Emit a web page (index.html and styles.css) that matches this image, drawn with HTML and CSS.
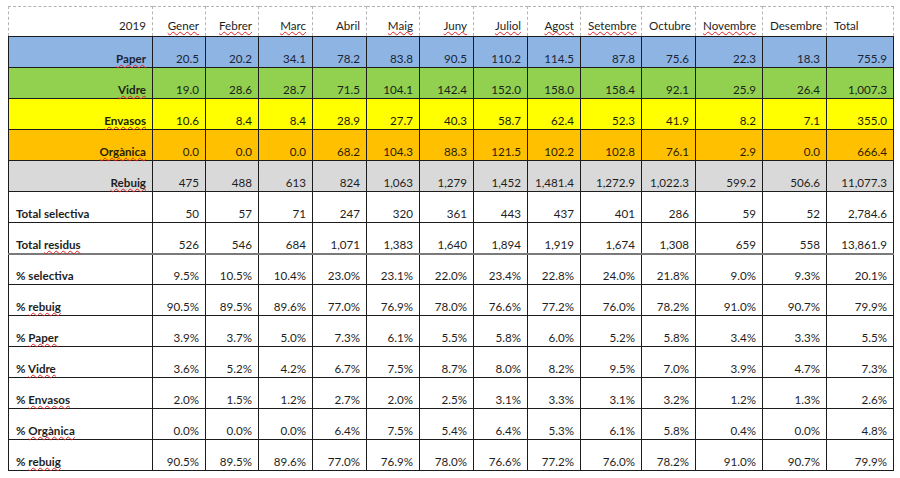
FILE: index.html
```html
<!DOCTYPE html>
<html lang="ca">
<head>
<meta charset="utf-8">
<title>Residus 2019</title>
<link rel="stylesheet" href="styles.css">
</head>
<body>
<div class="sheet">
<table class="grid">
<colgroup>
<col class="c-label"><col class="c53"><col class="c53"><col class="c54"><col class="c54"><col class="c53"><col class="c54"><col class="c54"><col class="c53"><col class="c61"><col class="c54"><col class="c67"><col class="c64"><col class="c67">
</colgroup>
<thead>
<tr class="head">
<th class="num">2019</th>
<th class="num"><span class="sq">Gener</span></th>
<th class="num"><span class="sq">Febrer</span></th>
<th class="num"><span class="sq">Marc</span></th>
<th class="num">Abril</th>
<th class="num"><span class="sq">Maig</span></th>
<th class="num"><span class="sq">Juny</span></th>
<th class="num"><span class="sq">Juliol</span></th>
<th class="num"><span class="sq">Agost</span></th>
<th class="num"><span class="sq">Setembre</span></th>
<th class="num">Octubre</th>
<th class="num"><span class="sq">Novembre</span></th>
<th class="num">Desembre</th>
<th class="txt">Total</th>
</tr>
</thead>
<tbody>
<tr class="r-paper"><th class="num"><span class="sq">Paper</span></th><td>20.5</td><td>20.2</td><td>34.1</td><td>78.2</td><td>83.8</td><td>90.5</td><td>110.2</td><td>114.5</td><td>87.8</td><td>75.6</td><td>22.3</td><td>18.3</td><td>755.9</td></tr>
<tr class="r-vidre"><th class="num"><span class="sq">Vidre</span></th><td>19.0</td><td>28.6</td><td>28.7</td><td>71.5</td><td>104.1</td><td>142.4</td><td>152.0</td><td>158.0</td><td>158.4</td><td>92.1</td><td>25.9</td><td>26.4</td><td>1,007.3</td></tr>
<tr class="r-envasos"><th class="num"><span class="sq">Envasos</span></th><td>10.6</td><td>8.4</td><td>8.4</td><td>28.9</td><td>27.7</td><td>40.3</td><td>58.7</td><td>62.4</td><td>52.3</td><td>41.9</td><td>8.2</td><td>7.1</td><td>355.0</td></tr>
<tr class="r-organica"><th class="num"><span class="sq">Orgànica</span></th><td>0.0</td><td>0.0</td><td>0.0</td><td>68.2</td><td>104.3</td><td>88.3</td><td>121.5</td><td>102.2</td><td>102.8</td><td>76.1</td><td>2.9</td><td>0.0</td><td>666.4</td></tr>
<tr class="r-rebuig"><th class="num"><span class="sq">Rebuig</span></th><td>475</td><td>488</td><td>613</td><td>824</td><td>1,063</td><td>1,279</td><td>1,452</td><td>1,481.4</td><td>1,272.9</td><td>1,022.3</td><td>599.2</td><td>506.6</td><td>11,077.3</td></tr>
<tr><th class="txt">Total selectiva</th><td>50</td><td>57</td><td>71</td><td>247</td><td>320</td><td>361</td><td>443</td><td>437</td><td>401</td><td>286</td><td>59</td><td>52</td><td>2,784.6</td></tr>
<tr class="r-sep"><th class="txt">Total <span class="sq">residus</span></th><td>526</td><td>546</td><td>684</td><td>1,071</td><td>1,383</td><td>1,640</td><td>1,894</td><td>1,919</td><td>1,674</td><td>1,308</td><td>659</td><td>558</td><td>13,861.9</td></tr>
<tr><th class="txt">% selectiva</th><td>9.5%</td><td>10.5%</td><td>10.4%</td><td>23.0%</td><td>23.1%</td><td>22.0%</td><td>23.4%</td><td>22.8%</td><td>24.0%</td><td>21.8%</td><td>9.0%</td><td>9.3%</td><td>20.1%</td></tr>
<tr><th class="txt">% <span class="sq">rebuig</span></th><td>90.5%</td><td>89.5%</td><td>89.6%</td><td>77.0%</td><td>76.9%</td><td>78.0%</td><td>76.6%</td><td>77.2%</td><td>76.0%</td><td>78.2%</td><td>91.0%</td><td>90.7%</td><td>79.9%</td></tr>
<tr><th class="txt">% <span class="sq">Paper</span></th><td>3.9%</td><td>3.7%</td><td>5.0%</td><td>7.3%</td><td>6.1%</td><td>5.5%</td><td>5.8%</td><td>6.0%</td><td>5.2%</td><td>5.8%</td><td>3.4%</td><td>3.3%</td><td>5.5%</td></tr>
<tr><th class="txt">% <span class="sq">Vidre</span></th><td>3.6%</td><td>5.2%</td><td>4.2%</td><td>6.7%</td><td>7.5%</td><td>8.7%</td><td>8.0%</td><td>8.2%</td><td>9.5%</td><td>7.0%</td><td>3.9%</td><td>4.7%</td><td>7.3%</td></tr>
<tr><th class="txt">% <span class="sq">Envasos</span></th><td>2.0%</td><td>1.5%</td><td>1.2%</td><td>2.7%</td><td>2.0%</td><td>2.5%</td><td>3.1%</td><td>3.3%</td><td>3.1%</td><td>3.2%</td><td>1.2%</td><td>1.3%</td><td>2.6%</td></tr>
<tr><th class="txt">% <span class="sq">Orgànica</span></th><td>0.0%</td><td>0.0%</td><td>0.0%</td><td>6.4%</td><td>7.5%</td><td>5.4%</td><td>6.4%</td><td>5.3%</td><td>6.1%</td><td>5.8%</td><td>0.4%</td><td>0.0%</td><td>4.8%</td></tr>
<tr><th class="txt">% <span class="sq">rebuig</span></th><td>90.5%</td><td>89.5%</td><td>89.6%</td><td>77.0%</td><td>76.9%</td><td>78.0%</td><td>76.6%</td><td>77.2%</td><td>76.0%</td><td>78.2%</td><td>91.0%</td><td>90.7%</td><td>79.9%</td></tr>
</tbody>
</table>
</div>
</body>
</html>
```
FILE: styles.css
```css
html, body {
  margin: 0;
  padding: 0;
  background: #ffffff;
}
.sheet {
  padding: 6px 0 0 8px;
}
.grid {
  border-collapse: collapse;
  table-layout: fixed;
  width: 886px;
  font-family: Lato, "Open Sans", sans-serif;
  font-size: 11.6px;
  line-height: 13px;
  color: #1e1e1e;
}
.c-label { width: 144px; }
.c53 { width: 53px; }
.c54 { width: 54px; }
.c61 { width: 61px; }
.c64 { width: 64px; }
.c67 { width: 67px; }

.grid th,
.grid td {
  border: 1px solid #1c1c1c;
  padding: 0 6px 2px 7px;
  vertical-align: bottom;
  white-space: nowrap;
}
.grid td { text-align: right; font-weight: normal; }
.grid tbody th { font-weight: bold; }
.grid tbody tr { height: 31px; }

.grid .num { text-align: right; }
.grid .txt { text-align: left; }

.head { height: 30px; }
.grid .head th {
  font-weight: normal;
  border: 1px dashed #b4b4b4;
  border-bottom: 1px solid #1c1c1c;
  padding-bottom: 4px;
}

.sq {
  text-decoration: underline wavy #e02020;
  text-decoration-thickness: 1px;
  text-underline-offset: 1px;
  text-decoration-skip-ink: none;
}

.r-paper { background: #8eb4e3; color: #1b2436; }
.r-vidre { background: #92d050; color: #1b2418; }
.r-envasos { background: #ffff00; color: #222200; }
.r-organica { background: #ffc000; color: #2a2000; }
.r-rebuig { background: #d9d9d9; }
.grid .r-sep th,
.grid .r-sep td { border-bottom: 2px solid #7a7a7a; }
```
